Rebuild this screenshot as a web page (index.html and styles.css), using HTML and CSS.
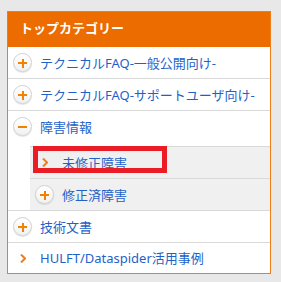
FILE: index.html
```html
<!DOCTYPE html>
<html lang="ja">
<head>
    <meta charset="UTF-8">
    <meta name="viewport" content="width=device-width, initial-scale=1.0">
    <title>トップカテゴリー</title>
    <link rel="stylesheet" href="styles.css">
</head>
<body>
    <div class="category-box">
        <h2 class="category-title">トップカテゴリー</h2>
        <ul class="category-list">
            <li class="category-item">
                <a href="#" class="category-link">
                    <span class="toggle-icon plus"></span>
                    <span>テクニカルFAQ-一般公開向け-</span>
                </a>
            </li>
            <li class="category-item">
                <a href="#" class="category-link">
                    <span class="toggle-icon plus"></span>
                    <span>テクニカルFAQ-サポートユーザ向け-</span>
                </a>
            </li>
            <li class="category-item open">
                <a href="#" class="category-link">
                    <span class="toggle-icon minus"></span>
                    <span>障害情報</span>
                </a>
                <ul class="sub-list">
                    <li class="sub-item current">
                        <a href="#" class="category-link">
                            <span class="arrow-icon">
                                <svg width="6" height="9" viewBox="0 0 6 9"><path d="M1 0.5 L5 4.5 L1 8.5" fill="none" stroke="#ee7d1a" stroke-width="2"/></svg>
                            </span>
                            <span>未修正障害</span>
                        </a>
                        <!-- highlight box drawn over the current item -->
                        <span class="highlight"></span>
                    </li>
                    <li class="sub-item">
                        <a href="#" class="category-link">
                            <span class="toggle-icon plus"></span>
                            <span>修正済障害</span>
                        </a>
                    </li>
                </ul>
            </li>
            <li class="category-item">
                <a href="#" class="category-link">
                    <span class="toggle-icon plus"></span>
                    <span>技術文書</span>
                </a>
            </li>
            <li class="category-item last">
                <a href="#" class="category-link">
                    <span class="arrow-icon">
                        <svg width="6" height="9" viewBox="0 0 6 9"><path d="M1 0.5 L5 4.5 L1 8.5" fill="none" stroke="#ee7d1a" stroke-width="2"/></svg>
                    </span>
                    <span>HULFT/Dataspider活用事例</span>
                </a>
            </li>
        </ul>
    </div>
</body>
</html>
```

FILE: styles.css
```css
/* Global Styles */
* {
    margin: 0;
    padding: 0;
    box-sizing: border-box;
    font-family: 'Noto Sans', 'Noto Sans CJK JP', sans-serif;
}

body {
    background-color: #e8e8e8;
}

/* Box */
.category-box {
    width: 264px;
    margin: 11px 0 0 7px;
    background-color: white;
    border: 1px solid #ee7d1a;
}

.category-title {
    height: 35px;
    padding-left: 12px;
    background-color: #ec6c00;
    color: white;
    font-size: 13px;
    font-weight: bold;
    line-height: 33px;
}

/* List */
.category-list {
    list-style: none;
}

.category-item {
    border-bottom: 1px solid #d9d9d9;
}

.category-item.last {
    border-bottom: none;
}

.category-link {
    display: flex;
    align-items: center;
    gap: 8px;
    height: 31px;
    padding-left: 5px;
    color: #1e62c8;
    font-size: 13px;
    line-height: 18px;
    text-decoration: none;
}

.category-item.last .category-link {
    height: 30px;
}

/* Icons */
.toggle-icon {
    position: relative;
    width: 19px;
    height: 19px;
    flex-shrink: 0;
    border-radius: 50%;
    border: 1px solid #d2d2d2;
    background: linear-gradient(#ffffff, #f1f1f1);
    box-shadow: 0 1px 1px rgba(0, 0, 0, 0.12);
}

.toggle-icon::before,
.toggle-icon.plus::after {
    content: '';
    position: absolute;
    background-color: #ef8200;
}

.toggle-icon::before {
    left: 4px;
    top: 8px;
    width: 9px;
    height: 2px;
}

.toggle-icon.plus::after {
    left: 7.5px;
    top: 4.5px;
    width: 2px;
    height: 9px;
}

.arrow-icon {
    display: flex;
    justify-content: center;
    width: 19px;
    flex-shrink: 0;
}

/* Sub list */
.sub-list {
    list-style: none;
    margin: 4px 0 0 22px;
    background-color: #f0f0f0;
}

.sub-item {
    position: relative;
    border-top: 1px solid #d9d9d9;
}

.highlight {
    position: absolute;
    left: 3px;
    top: -1px;
    width: 134px;
    height: 27px;
    border: 5px solid #ea1c26;
}
```
